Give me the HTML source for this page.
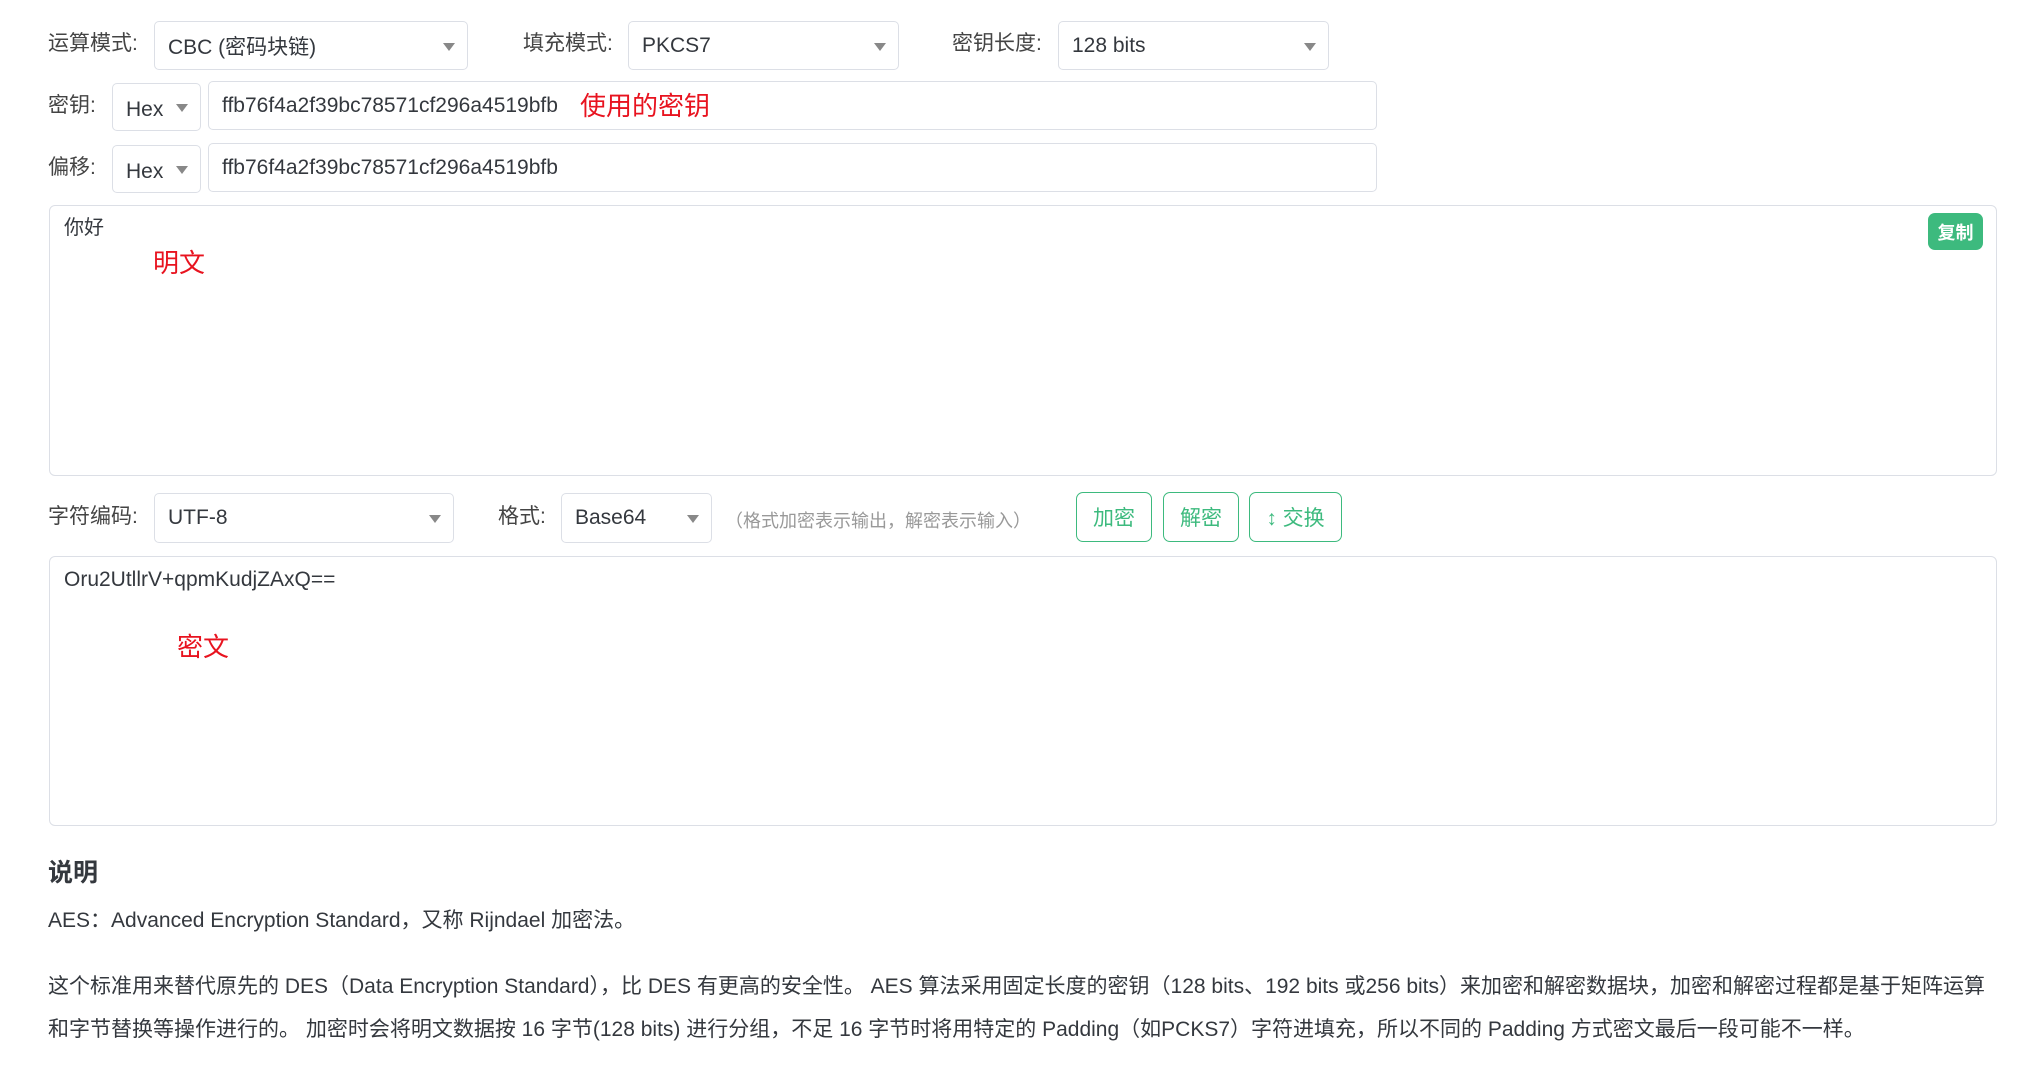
<!DOCTYPE html>
<html><head><meta charset="utf-8"><style>
*{box-sizing:border-box;margin:0;padding:0}
body{width:2018px;height:1067px;background:#fff;font-family:"Liberation Sans","Noto Sans CJK SC",sans-serif;color:#34383e;position:relative;overflow:hidden;font-size:21px}
.a{position:absolute}
.lbl{position:absolute;font-size:21px;color:#444;line-height:24px}
.sel,.inp{position:absolute;border:1px solid #dcdfe6;border-radius:5px;background:#fff;font-size:21px;color:#34383e;padding-left:13px;display:flex;align-items:center}
.sel:after{content:"";position:absolute;right:12px;top:50%;margin-top:-3px;border-left:6px solid transparent;border-right:6px solid transparent;border-top:8px solid #888}
.ta{position:absolute;border:1px solid #dcdfe6;border-radius:6px;background:#fff}
.red{position:absolute;color:#e8131f;font-size:26px;line-height:30px}
.btn{position:absolute;border:1px solid #3dba7e;border-radius:7px;color:#3dba7e;font-size:21px;display:flex;align-items:center;justify-content:center}
p{position:absolute;left:48px;font-size:21px;color:#34383e;line-height:24px}
</style></head><body>
<div class="lbl" style="left:48px;top:32px">运算模式:</div>
<div class="sel" style="left:154px;top:21px;width:314px;height:49px">CBC (密码块链)</div>
<div class="lbl" style="left:523px;top:32px">填充模式:</div>
<div class="sel" style="left:628px;top:21px;width:271px;height:49px">PKCS7</div>
<div class="lbl" style="left:952px;top:32px">密钥长度:</div>
<div class="sel" style="left:1058px;top:21px;width:271px;height:49px">128 bits</div>

<div class="lbl" style="left:48px;top:94px">密钥:</div>
<div class="sel" style="left:112px;top:83px;width:89px;height:48px;padding-top:6px">Hex</div>
<div class="inp" style="left:208px;top:81px;width:1169px;height:49px">ffb76f4a2f39bc78571cf296a4519bfb</div>
<div class="red" style="left:580px;top:91px">使用的密钥</div>

<div class="lbl" style="left:48px;top:156px">偏移:</div>
<div class="sel" style="left:112px;top:145px;width:89px;height:48px;padding-top:6px">Hex</div>
<div class="inp" style="left:208px;top:143px;width:1169px;height:49px">ffb76f4a2f39bc78571cf296a4519bfb</div>

<div class="ta" style="left:49px;top:205px;width:1948px;height:271px"></div>
<div class="a" style="left:64px;top:216px;font-size:20px;line-height:24px">你好</div>
<div class="red" style="left:153px;top:248px">明文</div>
<div class="a" style="left:1928px;top:213px;width:55px;height:37px;background:#3dba7e;border-radius:7px;color:#fff;font-weight:bold;font-size:18px;display:flex;align-items:center;justify-content:center">复制</div>

<div class="lbl" style="left:48px;top:505px">字符编码:</div>
<div class="sel" style="left:154px;top:493px;width:300px;height:50px">UTF-8</div>
<div class="lbl" style="left:498px;top:505px">格式:</div>
<div class="sel" style="left:561px;top:493px;width:151px;height:50px">Base64</div>
<div class="a" style="left:725px;top:507px;font-size:18px;color:#999">（格式加密表示输出，解密表示输入）</div>
<div class="btn" style="left:1076px;top:492px;width:76px;height:50px">加密</div>
<div class="btn" style="left:1163px;top:492px;width:76px;height:50px">解密</div>
<div class="btn" style="left:1249px;top:492px;width:93px;height:50px">↕ 交换</div>

<div class="ta" style="left:49px;top:556px;width:1948px;height:270px"></div>
<div class="a" style="left:64px;top:568px;font-size:21px;line-height:24px">Oru2UtllrV+qpmKudjZAxQ==</div>
<div class="red" style="left:177px;top:632px">密文</div>

<p style="top:858px;font-size:25px;font-weight:bold;line-height:30px">说明</p>
<p style="top:909px">AES：Advanced Encryption Standard，又称 Rijndael 加密法。</p>
<p style="top:975px;white-space:nowrap">这个标准用来替代原先的 DES（Data Encryption Standard），比 DES 有更高的安全性。 AES 算法采用固定长度的密钥（128 bits、192 bits 或256 bits）来加密和解密数据块，加密和解密过程都是基于矩阵运算</p>
<p style="top:1018px;white-space:nowrap">和字节替换等操作进行的。 加密时会将明文数据按 16 字节(128 bits) 进行分组，不足 16 字节时将用特定的 Padding（如PCKS7）字符进填充，所以不同的 Padding 方式密文最后一段可能不一样。</p>
</body></html>
